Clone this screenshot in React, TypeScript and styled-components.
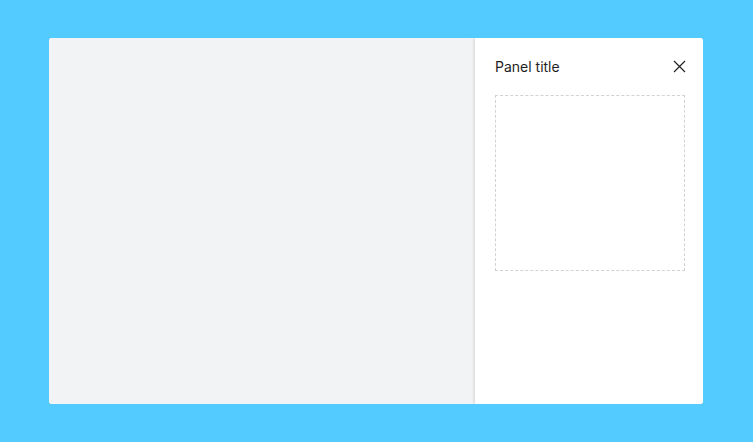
import React from "react";
import styled, { createGlobalStyle } from "styled-components";

const Global = createGlobalStyle`
  html, body { margin: 0; padding: 0; background: #53cbff; }
  body { font-family: Inter, "Noto Sans", sans-serif; }
`;

const Page = styled.div`
  width: 753px;
  height: 442px;
  box-sizing: border-box;
  padding: 38px 50px 38px 49px;
`;

const Card = styled.div`
  display: flex;
  height: 100%;
  border-radius: 3px;
  overflow: hidden;
  background: #f2f3f5;
`;

const Canvas = styled.div`
  flex: 1;
  background: #f2f3f5;
`;

const Panel = styled.aside`
  width: 228px;
  box-sizing: border-box;
  background: #ffffff;
  padding: 18px 17px 0 20px;
  box-shadow: -1px 0 3px rgba(0, 0, 0, 0.12);
  position: relative;
  display: flex;
  flex-direction: column;
  gap: 19px;
`;

const Header = styled.div`
  display: flex;
  align-items: center;
  justify-content: space-between;
  height: 20px;
`;

const Title = styled.h2`
  margin: 0;
  font-family: Inter, "Noto Sans", sans-serif;
  font-size: 14px;
  font-weight: 400;
  color: #1f1f1f;
`;

const Close = styled.button`
  border: 0;
  background: none;
  padding: 0;
  width: 13px;
  height: 13px;
  display: flex;
  color: #222;
  cursor: pointer;
`;

const Slot = styled.div`
  width: 190px;
  height: 176px;
  box-sizing: border-box;
  border: 1px dashed #d2d2d2;
`;

export default function App() {
  return (
    <>
      <Global />
      <Page>
        <Card>
          <Canvas />
          <Panel>
            <Header>
              <Title>Panel title</Title>
              <Close aria-label="Close">
                <svg width="13" height="13" viewBox="0 0 13 13" fill="none">
                  <path d="M1 1L12 12M12 1L1 12" stroke="currentColor" strokeWidth="1.2" />
                </svg>
              </Close>
            </Header>
            <Slot />
          </Panel>
        </Card>
      </Page>
    </>
  );
}
